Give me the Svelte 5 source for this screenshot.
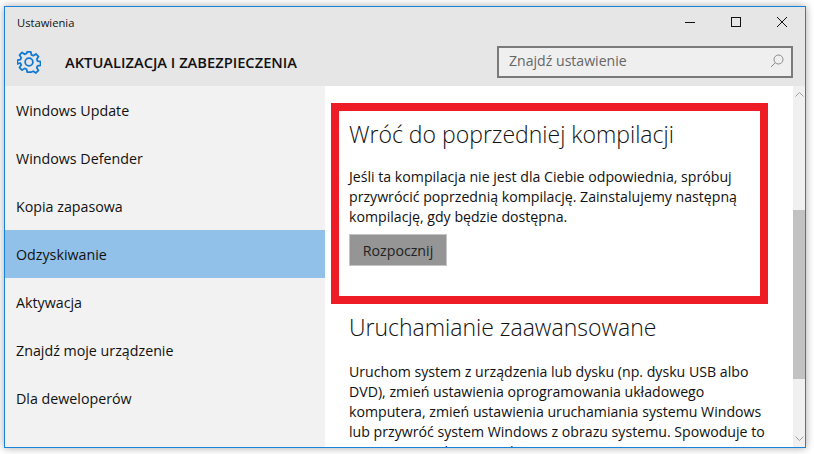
<script>
	const items = [
		"Windows Update",
		"Windows Defender",
		"Kopia zapasowa",
		"Odzyskiwanie",
		"Aktywacja",
		"Znajdź moje urządzenie",
		"Dla deweloperów",
	]
	const active = "Odzyskiwanie"
</script>

<div class="page">
	<div class="window">
		<header class="top">
			<div class="titlebar">
				<span class="apptitle">Ustawienia</span>
				<div class="controls">
					<svg width="12" height="12" viewBox="0 0 12 12"><path d="M1 6.5h10" stroke="#111" fill="none" /></svg>
					<svg width="12" height="12" viewBox="0 0 12 12"><rect x="1.5" y="1.5" width="9" height="9" stroke="#111" fill="none" /></svg>
					<svg width="12" height="12" viewBox="0 0 12 12"><path d="M1 1l10 10M11 1L1 11" stroke="#111" fill="none" /></svg>
				</div>
			</div>
			<div class="headrow">
				<svg class="gear" width="24" height="24" viewBox="0 0 26 26">
					<path d="M11 2h4l.6 3.3 2.1.9 2.8-1.9 2.8 2.8-1.9 2.8.9 2.1 3.2.6v4l-3.2.6-.9 2.1 1.9 2.8-2.8 2.8-2.8-1.9-2.1.9L15 24h-4l-.6-3.2-2.1-.9-2.8 1.9-2.8-2.8 1.9-2.8-.9-2.1L0.5 15v-4l3.2-.6.9-2.1-1.9-2.8 2.8-2.8 2.8 1.9 2.1-.9z" fill="none" stroke="#0f78d4" stroke-width="1.9" stroke-linejoin="round" />
					<circle cx="13" cy="13" r="4.2" fill="none" stroke="#0f78d4" stroke-width="1.9" />
				</svg>
				<h1>AKTUALIZACJA I ZABEZPIECZENIA</h1>
				<div class="search">
					<span>Znajdź ustawienie</span>
					<svg width="14" height="14" viewBox="0 0 14 14"><circle cx="8.5" cy="5.5" r="4.5" fill="none" stroke="#8a8a8a" /><path d="M5.2 8.8L1 13" stroke="#8a8a8a" fill="none" /></svg>
				</div>
			</div>
		</header>
		<div class="body">
			<nav class="side">
				{#each items as item}
					<div class="item" class:active={item === active}>{item}</div>
				{/each}
			</nav>
			<main class="content">
				<section class="marked">
					<h2>Wróć do poprzedniej kompilacji</h2>
					<p>Jeśli ta kompilacja nie jest dla Ciebie odpowiednia, spróbuj przywrócić poprzednią kompilację. Zainstalujemy następną kompilację, gdy będzie dostępna.</p>
					<button>Rozpocznij</button>
				</section>
				<section class="next">
					<h2>Uruchamianie zaawansowane</h2>
					<p>Uruchom system z urządzenia lub dysku (np. dysku USB albo DVD), zmień ustawienia oprogramowania układowego komputera, zmień ustawienia uruchamiania systemu Windows lub przywróć system Windows z obrazu systemu. Spowoduje to ponowne uruchomienie komputera.</p>
				</section>
			</main>
			<div class="scroll">
				<svg class="arrow" width="9" height="5" viewBox="0 0 9 5"><path d="M0.5 4.5l4-4 4 4" stroke="#a0a0a0" fill="none" /></svg>
				<div class="thumb"></div>
				<svg class="arrow" width="9" height="5" viewBox="0 0 9 5"><path d="M0.5 0.5l4 4 4-4" stroke="#a0a0a0" fill="none" /></svg>
			</div>
		</div>
	</div>
</div>

<style>
	:global(body) {
		margin: 0;
		background: #fff;
	}

	.page {
		width: 814px;
		height: 454px;
		padding: 6px 8px 6px 4px;
		box-sizing: border-box;
		font-family: "Open Sans", sans-serif;
		color: #111;
		overflow: hidden;
	}

	.window {
		height: 442px;
		box-sizing: border-box;
		border: 1px solid #1a82d8;
		box-shadow: 0 0 8px rgba(0, 0, 0, 0.35);
		display: flex;
		flex-direction: column;
		overflow: hidden;
		background: #fff;
	}

	.top {
		height: 79px;
		background: #e6e6e6;
		flex: none;
	}

	.titlebar {
		height: 30px;
		display: flex;
		align-items: center;
		justify-content: space-between;
		padding-left: 12px;
	}

	.apptitle {
		font-size: 11.2px;
	}

	.controls {
		display: flex;
		gap: 34px;
		padding-right: 17px;
	}

	.headrow {
		height: 49px;
		display: flex;
		align-items: center;
		padding-left: 12px;
		padding-right: 12px;
	}

	.gear {
		flex: none;
	}

	h1 {
		margin: 0 0 0 24px;
		font-size: 14.7px;
		font-weight: 600;
		flex: 1;
	}

	.search {
		width: 296px;
		height: 32px;
		box-sizing: border-box;
		border: 2px solid #7a7a7a;
		background: #efefef;
		color: #666;
		font-size: 14.1px;
		line-height: 26px;
		display: flex;
		align-items: center;
		justify-content: space-between;
		padding: 0 7px 2px 10px;
	}

	.body {
		flex: 1;
		display: flex;
		min-height: 0;
	}

	.side {
		width: 320px;
		flex: none;
		background: #f2f2f2;
	}

	.item {
		height: 48px;
		line-height: 50px;
		padding-left: 11px;
		font-size: 14.25px;
	}

	.item.active {
		background: #91c1e8;
	}

	.content {
		flex: 1;
		min-width: 0;
		overflow: hidden;
		padding: 17px 0 0 6px;
	}

	.marked {
		width: 437px;
		height: 201px;
		box-sizing: border-box;
		border: 8px solid #ee1c25;
		padding: 7px 0 0 10px;
	}

	h2 {
		margin: 0;
		font-size: 23px;
		font-weight: 300;
		line-height: 32px;
	}

	p {
		margin: 17px 0 0;
		font-size: 14.15px;
		line-height: 20px;
	}

	button {
		display: block;
		margin-top: 7px;
		width: 98px;
		height: 32px;
		border: 1px solid #c4c4c4;
		background: #959595;
		color: #222;
		font: inherit;
		font-size: 14.2px;
		padding: 0;
	}

	.next {
		padding: 7px 16px 0 18px;
	}

	.next p {
		margin-top: 19px;
	}

	.scroll {
		width: 12px;
		flex: none;
		background: #f0f0f0;
		display: flex;
		flex-direction: column;
		align-items: center;
		justify-content: space-between;
		position: relative;
	}

	.arrow {
		margin: 6px 0;
	}

	.thumb {
		position: absolute;
		left: 0;
		right: 0;
		top: 124px;
		height: 169px;
		background: #c2c2c2;
	}
</style>
